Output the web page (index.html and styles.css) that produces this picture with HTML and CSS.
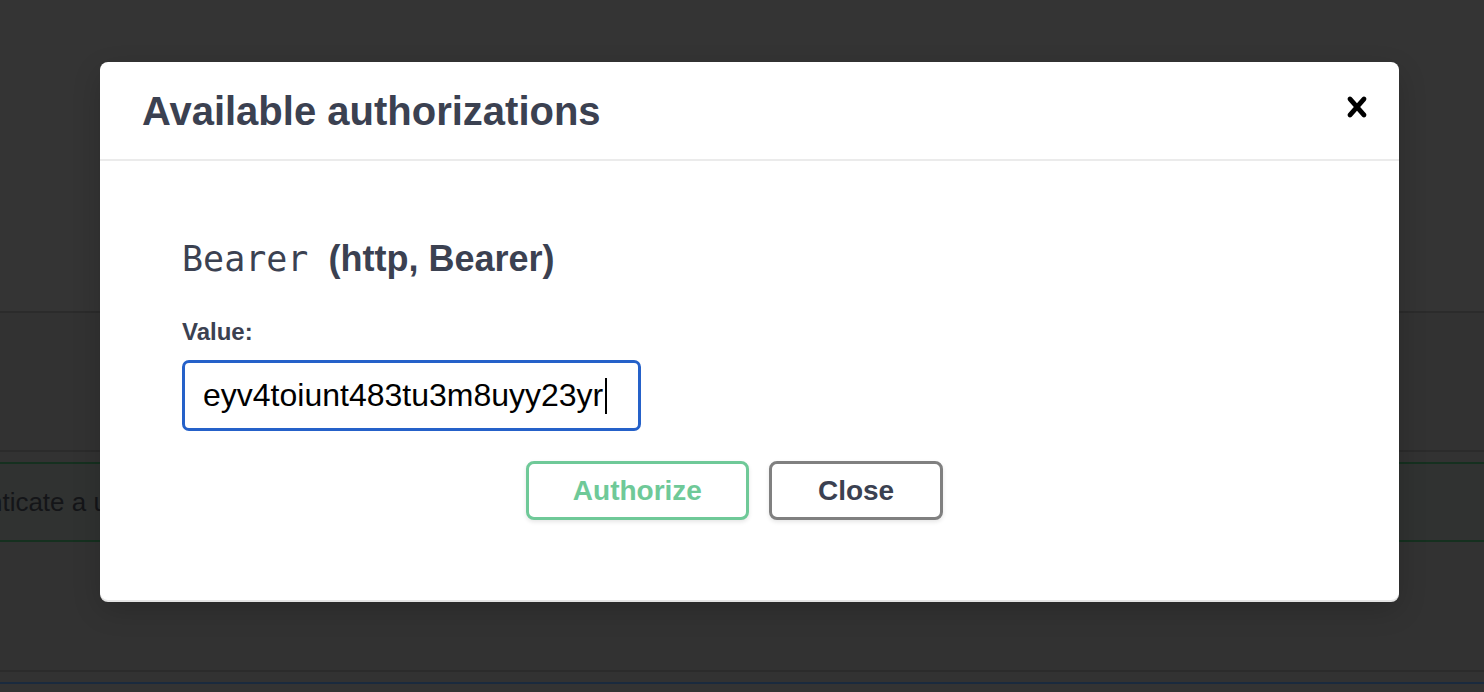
FILE: index.html
```html
<!DOCTYPE html>
<html lang="en">
<head>
<meta charset="utf-8">
<title>Available authorizations</title>
<link rel="stylesheet" href="styles.css">
</head>
<body>
<div class="page">
  <div class="info-area"></div>
  <div class="rule rule-top"></div>
  <div class="spacer spacer-1"></div>
  <div class="rule rule-mid"></div>
  <div class="spacer spacer-2"></div>
  <div class="opblock-post">
    <span class="op-desc">Authenticate a user</span>
  </div>
  <div class="spacer spacer-3"></div>
  <div class="rule rule-low"></div>
  <div class="spacer spacer-4"></div>
  <div class="rule-get"></div>
  <div class="spacer-rest"></div>
</div>

<div class="modal" role="dialog" aria-label="Available authorizations">
  <div class="modal-header">
    <h3 class="modal-title">Available authorizations</h3>
    <button class="close-modal" type="button" aria-label="Close modal">
      <svg width="40" height="40" viewBox="0 0 20 20" aria-hidden="true">
        <path d="M14.348 14.849c-.469.469-1.229.469-1.697 0L10 11.819l-2.651 3.029c-.469.469-1.229.469-1.697 0-.469-.469-.469-1.229 0-1.697l2.758-3.15-2.759-3.152c-.469-.469-.469-1.228 0-1.697.469-.469 1.228-.469 1.697 0L10 8.183l2.651-3.031c.469-.469 1.228-.469 1.697 0 .469.469.469 1.229 0 1.697l-2.758 3.152 2.758 3.150c.469.469.469 1.229 0 1.698z"/>
      </svg>
    </button>
  </div>
  <div class="modal-body">
    <h4 class="auth-title"><code class="auth-name">Bearer</code>&nbsp; (http, Bearer)</h4>
    <label class="value-label">Value:</label>
    <div class="value-input" role="textbox">eyv4toiunt483tu3m8uyy23yr<span class="caret"></span></div>
    <div class="btn-wrapper">
      <button class="btn btn-authorize" type="button">Authorize</button>
      <button class="btn btn-close" type="button">Close</button>
    </div>
  </div>
</div>
</body>
</html>
```

FILE: styles.css
```css
* { box-sizing: border-box; }

html, body {
  margin: 0;
  padding: 0;
  height: 100%;
  overflow: hidden;
  background: #333333;
  font-family: "Liberation Sans", Arial, sans-serif;
}

.page {
  display: flex;
  flex-direction: column;
  height: 692px;
}

.info-area { height: 311px; background: #343434; }
.rule { height: 2px; background: #2b2b2b; flex: none; }
.spacer { background: #323232; flex: none; }
.spacer-1 { height: 137px; }
.spacer-2 { height: 10px; }
.spacer-3 { height: 128px; }
.spacer-4 { height: 10px; }

.opblock-post {
  height: 80px;
  flex: none;
  display: flex;
  align-items: center;
  background: #303231;
  border-top: 2px solid #15301f;
  border-bottom: 2px solid #15301f;
  overflow: hidden;
}

.op-desc {
  margin-left: -80px;
  font-size: 26px;
  color: #141518;
  white-space: nowrap;
}

.rule-get { height: 2px; background: #1a2a3e; flex: none; }
.spacer-rest { flex: 1; background: #333333; }

.modal {
  position: absolute;
  left: 100px;
  top: 62px;
  width: 1299px;
  background: #ffffff;
  border-radius: 8px;
  box-shadow: 0 2px 0 #e4e4e4, 0 10px 30px -2px rgba(0, 0, 0, 0.2);
  color: #3b4151;
}

.modal-header {
  display: flex;
  align-items: center;
  height: 99px;
  border-bottom: 2px solid #ebebeb;
}

.modal-title {
  flex: 1;
  margin: 0;
  padding: 0 0 0 42px;
  font-size: 40px;
  font-weight: 700;
  color: #3b4151;
  line-height: 46px;
}

.close-modal {
  background: none;
  border: none;
  padding: 0 22px 0 20px;
  margin: 0 0 8px 0;
  cursor: pointer;
  display: flex;
}

.close-modal svg { fill: #000000; }

.modal-body {
  display: flex;
  flex-direction: column;
  align-items: flex-start;
  padding: 77px 82px 80px 82px;
}

.auth-title {
  margin: 0;
  font-size: 36px;
  font-weight: 700;
  line-height: 41px;
  color: #3b4151;
}

.auth-name {
  font-family: "DejaVu Sans Mono", "Liberation Mono", monospace;
  font-weight: 400;
  font-size: 35px;
  color: #3b4151;
}

.value-label {
  margin-top: 38px;
  font-size: 24px;
  font-weight: 700;
  line-height: 27px;
  color: #3b4151;
}

.value-input {
  margin-top: 15px;
  width: 459px;
  height: 71px;
  border: 3px solid #2561c9;
  border-radius: 7px;
  padding: 0 18px;
  display: flex;
  align-items: center;
  font-size: 32px;
  color: #000000;
  white-space: nowrap;
}

.caret {
  display: inline-block;
  width: 2px;
  height: 36px;
  margin-left: 2px;
  background: #000000;
}

.btn-wrapper {
  align-self: stretch;
  margin-top: 30px;
  display: flex;
  justify-content: center;
  gap: 20px;
}

.btn {
  height: 59px;
  padding: 0 44px;
  border-radius: 8px;
  background: #ffffff;
  font-family: "Liberation Sans", Arial, sans-serif;
  font-size: 28px;
  font-weight: 700;
  box-shadow: 0 2px 4px rgba(0, 0, 0, 0.1);
  cursor: pointer;
}

.btn-authorize {
  border: 3px solid #6fc998;
  color: #6fc998;
}

.btn-close {
  border: 3px solid #808080;
  color: #3b4151;
  padding: 0 46px;
  margin-right: 30px;
}
```
